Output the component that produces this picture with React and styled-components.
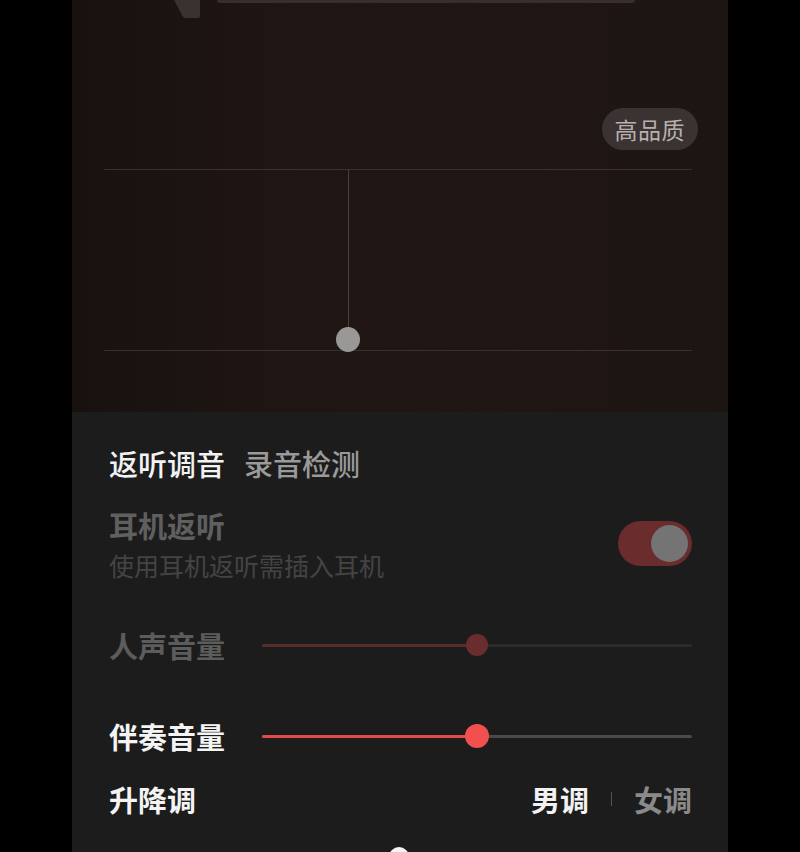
import React from "react";
import styled, { createGlobalStyle } from "styled-components";

const Global = createGlobalStyle`
  html, body { margin: 0; padding: 0; background: #000; }
  body { font-family: "Noto Sans CJK SC", "Noto Sans", sans-serif; }
  * { box-sizing: border-box; }
`;

const Phone = styled.div`
  width: 656px;
  height: 852px;
  margin: 0 auto;
  overflow: hidden;
  display: flex;
  flex-direction: column;
  background: #1c1c1c;
`;

const Stage = styled.section`
  height: 412px;
  flex: none;
  padding: 0 36px 0 32px;
  background: linear-gradient(90deg, #181110 0%, #1f1613 30%, #201714 60%, #1d1512 100%);
  display: flex;
  flex-direction: column;
`;

const TopDeco = styled.div`
  height: 18px;
  display: flex;
  align-items: flex-start;
  padding-left: 70px;
  gap: 15px;
`;

const Tail = styled.svg`
  width: 28px;
  height: 18px;
  flex: none;
`;

const TopBar = styled.div`
  width: 418px;
  height: 3px;
  background: #382f2d;
  border-radius: 0 0 3px 3px;
`;

const BadgeRow = styled.div`
  display: flex;
  justify-content: flex-end;
  margin-top: 90px;
  margin-right: -6px;
`;

const Badge = styled.div`
  height: 42px;
  padding: 0 13px;
  border-radius: 21px;
  background: #3a3331;
  color: #b7b1ae;
  font-size: 23px;
  line-height: 42px;
  letter-spacing: 0.5px;
`;

const Chart = styled.div`
  position: relative;
  margin-top: 19px;
  height: 182px;
  border-top: 1px solid #3a302d;
  border-bottom: 1px solid #3a302d;
`;

const Stem = styled.div`
  position: absolute;
  left: ${(p) => p.$x}px;
  top: 0;
  width: 1px;
  height: ${(p) => p.$h}px;
  background: #4a403d;
`;

const Knob = styled.div`
  position: absolute;
  left: ${(p) => p.$x - 12}px;
  top: ${(p) => p.$y - 12}px;
  width: 24px;
  height: 25px;
  border-radius: 50%;
  background: #9a9897;
`;

const Panel = styled.section`
  flex: 1;
  padding: 26px 36px 0 37px;
  display: flex;
  flex-direction: column;
`;

const Tabs = styled.div`
  height: 50px;
  display: flex;
  align-items: center;
  gap: 19px;
`;

const Tab = styled.span`
  font-size: 29px;
  line-height: 1;
  font-weight: 500;
  color: ${(p) => (p.$active ? "#f2f2f2" : "#9a9a9a")};
`;

const SettingRow = styled.div`
  margin-top: ${(p) => p.$mt}px;
  display: flex;
  align-items: center;
  justify-content: space-between;
`;

const SettingText = styled.div`
  display: flex;
  flex-direction: column;
  gap: 7px;
`;

const Label = styled.div`
  font-size: 29px;
  line-height: 36px;
  font-weight: 700;
  color: ${(p) => p.$color};
  white-space: nowrap;
`;

const Hint = styled.div`
  font-size: 25px;
  line-height: 30px;
  color: #444444;
  white-space: nowrap;
`;

const Toggle = styled.div`
  width: 74px;
  height: 45px;
  border-radius: 23px;
  background: #6a2c2c;
  display: flex;
  align-items: center;
  justify-content: flex-end;
  padding-right: 4px;
`;

const ToggleKnob = styled.div`
  width: 37px;
  height: 37px;
  border-radius: 50%;
  background: #747474;
`;

const SliderRow = styled.div`
  margin-top: ${(p) => p.$mt}px;
  height: 50px;
  display: flex;
  align-items: center;
`;

const SliderLabel = styled(Label)`
  width: 153px;
  flex: none;
`;

const Track = styled.div`
  position: relative;
  flex: 1;
  height: 3px;
  border-radius: 2px;
  background: ${(p) => p.$rest};
`;

const Fill = styled.div`
  height: 100%;
  border-radius: 2px;
  background: ${(p) => p.$color};
`;

const Thumb = styled.div`
  position: absolute;
  top: 50%;
  width: ${(p) => p.$size}px;
  height: ${(p) => p.$size}px;
  border-radius: 50%;
  background: ${(p) => p.$color};
  transform: translate(-50%, -50%);
`;

const PitchRow = styled.div`
  margin-top: 13px;
  height: 50px;
  display: flex;
  align-items: center;
  justify-content: space-between;
`;

const PitchOptions = styled.div`
  display: flex;
  align-items: center;
  gap: 22px;
`;

const Option = styled.span`
  font-size: 29px;
  line-height: 1;
  font-weight: 700;
  color: ${(p) => (p.$active ? "#f2f2f2" : "#8a8a8a")};
`;

const Divider = styled.span`
  width: 1px;
  height: 14px;
  background: #555;
`;

const Peek = styled.div`
  margin-top: 23px;
  display: flex;
  justify-content: center;
`;

const PeekDot = styled.div`
  width: 20px;
  height: 20px;
  border-radius: 50%;
  background: #f4f4f4;
  margin-right: 3px;
`;

function Slider({ value, fill, rest, thumb, size }) {
  return (
    <Track $rest={rest}>
      <Fill $color={fill} style={{ width: `${value}%` }} />
      <Thumb $color={thumb} $size={size} style={{ left: `${value}%` }} />
    </Track>
  );
}

export default function App() {
  return (
    <>
      <Global />
      <Phone>
        <Stage>
          <TopDeco>
            <Tail viewBox="0 0 28 18">
              <path d="M0 0 H26 V16 Q26 18 24 18 H12 Q9 18 8 15 Z" fill="#3a3230" />
            </Tail>
            <TopBar />
          </TopDeco>
          <BadgeRow>
            <Badge>高品质</Badge>
          </BadgeRow>
          <Chart>
            <Stem $x={244} $h={158} />
            <Knob $x={244} $y={169} />
          </Chart>
        </Stage>
        <Panel>
          <Tabs>
            <Tab $active>返听调音</Tab>
            <Tab>录音检测</Tab>
          </Tabs>
          <SettingRow $mt={19}>
            <SettingText>
              <Label $color="#5f5f5f">耳机返听</Label>
              <Hint>使用耳机返听需插入耳机</Hint>
            </SettingText>
            <Toggle>
              <ToggleKnob />
            </Toggle>
          </SettingRow>
          <SliderRow $mt={40}>
            <SliderLabel $color="#5c5c5c">人声音量</SliderLabel>
            <Slider value={50} fill="#5a2b2b" rest="#2b2b2b" thumb="#6a2d2d" size={22} />
          </SliderRow>
          <SliderRow $mt={41}>
            <SliderLabel $color="#f4f4f4">伴奏音量</SliderLabel>
            <Slider value={50} fill="#e24b4b" rest="#4a4a4a" thumb="#f25050" size={24} />
          </SliderRow>
          <PitchRow>
            <Label $color="#f4f4f4">升降调</Label>
            <PitchOptions>
              <Option $active>男调</Option>
              <Divider />
              <Option>女调</Option>
            </PitchOptions>
          </PitchRow>
          <Peek>
            <PeekDot />
          </Peek>
        </Panel>
      </Phone>
    </>
  );
}
